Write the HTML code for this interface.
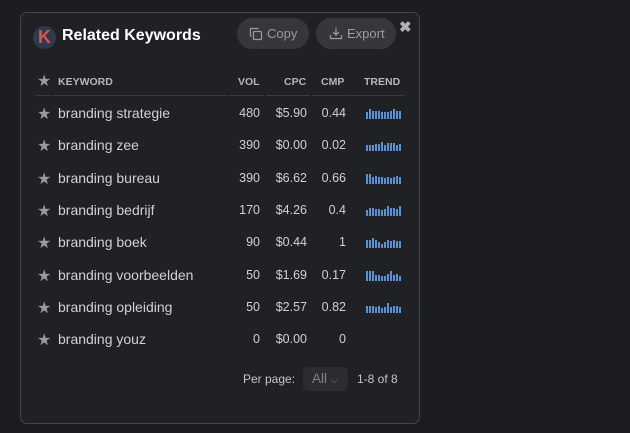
<!DOCTYPE html>
<html><head><style>
body{margin:0;width:630px;height:433px;background:#1c1d20;font-family:"Liberation Sans",sans-serif;position:relative;overflow:hidden}
.p{position:absolute;left:20px;top:12px;width:400px;height:412px;border:1px solid #45464a;border-radius:7px;background:#202124;box-sizing:border-box}
.a{position:absolute;white-space:nowrap}
.logo{left:33px;top:26px;width:23px;height:23px;border-radius:50%;background:#2f3b4c;color:#d9534f;font-weight:bold;font-size:18px;text-align:center;line-height:23px}
.title{left:62px;top:27px;color:#fff;font-weight:bold;font-size:16px}
.btn{top:18px;height:31px;border-radius:16px;background:#36373b;color:#9a9ca0;font-size:13px;line-height:31px;box-sizing:border-box}
.h{color:#b5b6b9;font-size:10.5px;font-weight:bold;top:76px}
.r{color:#d0d1d3;font-size:14px}
.n{color:#d0d1d3;font-size:12.5px;text-align:right}
.st{color:#9a9ba0;font-size:16px;left:37px}
.ln{position:absolute;top:95px;height:1px;background:#3a3b3f}
</style></head><body>
<div class="p"></div>
<div class="a logo">K</div>
<div class="a title">Related Keywords</div>
<div class="a btn" style="left:237px;width:72px;padding-left:30px">Copy
<svg style="position:absolute;left:12px;top:9px" width="14" height="14" viewBox="0 0 14 14" fill="none" stroke="#9a9ca0" stroke-width="1.2"><rect x="4.5" y="4.5" width="8" height="8" rx="1"/><path d="M9 2.5V1.5H1.5V9H2.5"/></svg></div>
<div class="a btn" style="left:316px;width:80px;padding-left:31px">Export
<svg style="position:absolute;left:13px;top:8px" width="14" height="14" viewBox="0 0 14 14" fill="none" stroke="#9a9ca0" stroke-width="1.2"><path d="M7 1.5V9M4 6l3 3 3-3M1.5 9v3.5h11V9"/></svg></div>
<div class="a" style="left:399px;top:18px;color:#b0b1b4;font-size:15px;font-weight:bold">✖</div>
<div class="a st" style="top:71px">★</div>
<div class="a h" style="left:58px">KEYWORD</div>
<div class="a h" style="left:238px">VOL</div>
<div class="a h" style="left:284px">CPC</div>
<div class="a h" style="left:321px">CMP</div>
<div class="a h" style="left:364px">TREND</div>
<div class="ln" style="left:35px;width:17px"></div>
<div class="ln" style="left:54px;width:172px"></div>
<div class="ln" style="left:228px;width:36px"></div>
<div class="ln" style="left:266px;width:44px"></div>
<div class="ln" style="left:312px;width:38px"></div>
<div class="ln" style="left:351px;width:54px"></div>
<div id="rows"></div>
<div class="a" style="left:243px;top:372px;color:#c4c5c8;font-size:12px">Per page:</div>
<div class="a" style="left:303px;top:367px;width:45px;height:24px;border-radius:6px;background:#2c2d31;color:#808286;font-size:13.5px;line-height:24px;padding-left:9px;box-sizing:border-box">All <span style="font-size:9px">⌵</span></div>
<div class="a" style="left:357px;top:372px;color:#c4c5c8;font-size:12px">1-8 of 8</div>
<script>
var d=[["branding strategie","480","$5.90","0.44",[7,10,8,8,8,7,7,7,8,10,8,8]],
["branding zee","390","$0.00","0.02",[6,6,6,7,7,9,6,8,8,8,6,7]],
["branding bureau","390","$6.62","0.66",[10,10,7,8,7,7,6,7,6,7,8,7]],
["branding bedrijf","170","$4.26","0.4",[6,8,8,7,7,6,7,10,8,8,7,10]],
["branding boek","90","$0.44","1",[8,8,10,8,6,4,6,8,7,8,7,7]],
["branding voorbeelden","50","$1.69","0.17",[10,10,10,6,6,5,5,7,10,6,7,5]],
["branding opleiding","50","$2.57","0.82",[7,7,7,6,7,5,6,10,6,7,7,6]],
["branding youz","0","$0.00","0",null]];
var h="";
d.forEach(function(r,i){var y=105+i*32.3;
h+='<div class="a st" style="top:'+(y-1)+'px">★</div><div class="a r" style="left:58px;top:'+y+'px">'+r[0]+'</div>';
h+='<div class="a n" style="right:370px;top:'+(y+1)+'px">'+r[1]+'</div><div class="a n" style="right:323px;top:'+(y+1)+'px">'+r[2]+'</div><div class="a n" style="right:284px;top:'+(y+1)+'px">'+r[3]+'</div>';
if(r[4]){var s='<svg class="a" style="left:366px;top:'+(y+2)+'px" width="36" height="12">';r[4].forEach(function(v,j){s+='<rect x="'+(j*3)+'" y="'+(12-v)+'" width="2" height="'+v+'" fill="#5b8fd6"/>'});h+=s+'</svg>';}
});
document.getElementById("rows").innerHTML=h;
</script>
</body></html>
